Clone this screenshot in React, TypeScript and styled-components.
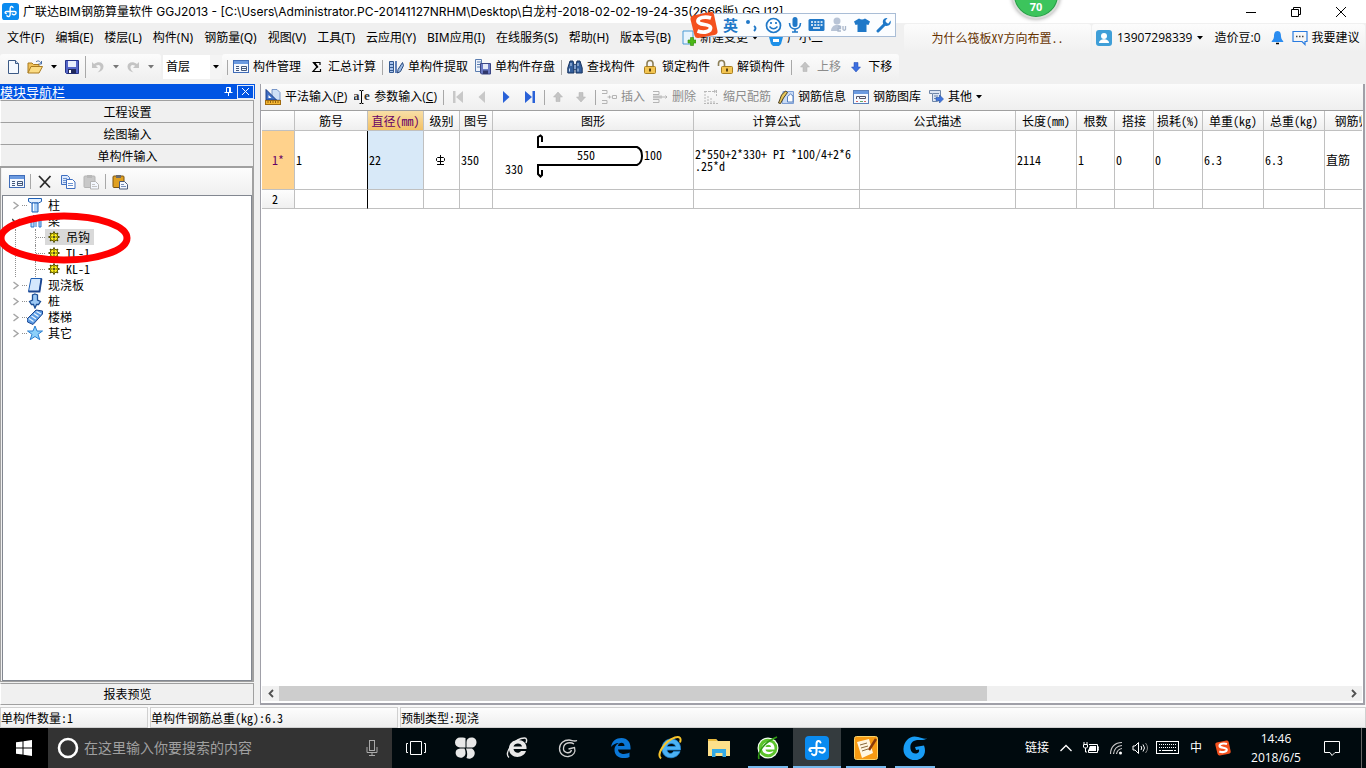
import React from "react";
import styled, { createGlobalStyle, css } from "styled-components";

const UI = `"Open Sans", "Noto Sans CJK SC", sans-serif`;
const WIDE_UI = `"Noto Sans", "Noto Sans CJK SC", sans-serif`;
const TITLE_UI = `Inter, "Noto Sans CJK SC", sans-serif`;
const SONG = `"Noto Sans Mono CJK SC", "Noto Sans CJK SC", monospace`;

const GlobalStyle = createGlobalStyle`
  * { box-sizing: border-box; }
  html, body { margin: 0; padding: 0; }
  body { background: #f0f0f0; color: #000; font: 12px/16px ${UI}; overflow: hidden; }
  button, input, select { font: inherit; color: inherit; margin: 0; }
  svg { display: block; flex: none; }
`;

const Page = styled.div`
  position: relative;
  display: flex;
  flex-direction: column;
  height: 100vh;
  background: #f0f0f0;
  overflow: hidden;
`;

const bareButton = css`
  border: 0;
  padding: 0;
  background: none;
  display: flex;
  align-items: center;
  white-space: nowrap;
  flex: none;
`;

/* ---------- title bar ---------- */

const TitleBar = styled.header`
  display: flex;
  align-items: center;
  height: 23px;
  padding-left: 2px;
  background: #fff;
  flex: none;
`;
const TitleText = styled.h1`
  flex: 1;
  margin: 0 0 0 4px;
  font-family: ${TITLE_UI};
  font-size: 12px;
  line-height: 16px;
  font-weight: 400;
  white-space: nowrap;
  overflow: hidden;
`;
const WindowButton = styled.button`
  ${bareButton}
  width: 45px;
  height: 20px;
  justify-content: center;
  &:last-child { margin-right: 3px; }
`;

/* ---------- menu bar ---------- */

const MenuBar = styled.nav`
  display: flex;
  align-items: center;
  height: 30px;
  padding-left: 2px;
  flex: none;
`;
const MenuItem = styled.button`
  ${bareButton}
  font-family: ${WIDE_UI};
  padding: 0 6px 0 5px;
  height: 24px;
  gap: 4px;
`;
const MenuSegment = styled.div<{ $width: number }>`
  display: flex;
  align-items: center;
  width: ${(p) => p.$width}px;
  height: 28px;
  margin-right: 1px;
  padding: 0 4px;
  border-radius: 3px;
  background: linear-gradient(#fcfcfc, #f0f0f0);
  flex: none;
`;
const Spacer = styled.div`
  flex: 1;
`;
const HelpLink = styled.a`
  margin: 0 auto;
  color: #663300;
  font-family: ${SONG};
  text-decoration: none;
  white-space: nowrap;
`;
const AccountItem = styled.button<{ $gap?: number; $after?: number }>`
  ${bareButton}
  gap: ${(p) => p.$gap ?? 5}px;
  margin-right: ${(p) => p.$after ?? 8}px;
`;

/* ---------- toolbars ---------- */

const ToolbarRow = styled.div`
  display: flex;
  align-items: center;
  height: 28px;
  margin-bottom: 3px;
  flex: none;
`;
const ToolGroup = styled.div`
  display: flex;
  align-items: center;
  height: 27px;
  padding: 0 3px;
  border-radius: 3px;
  background: linear-gradient(#fcfcfc, #efefef);
`;
const ToolButton = styled.button<{ $split?: boolean }>`
  ${bareButton}
  gap: ${(p) => (p.$split ? 8 : 4)}px;
  height: 24px;
  padding: 0 4px 0 3px;
  &:disabled { color: #8c8c8c; }
`;
const IconButton = styled.button<{ $width?: number }>`
  ${bareButton}
  justify-content: center;
  width: ${(p) => p.$width ?? 24}px;
  height: 24px;
`;
const Separator = styled.span<{ $height?: number }>`
  width: 1px;
  height: ${(p) => p.$height ?? 15}px;
  margin: 0 2px;
  background: #a8a8a8;
  flex: none;
`;
const FloorField = styled.label`
  position: relative;
  display: flex;
  align-items: center;
  width: 59px;
  height: 24px;
  margin: 0 0 0 2px;
  background: #fff;
`;
const FloorSelect = styled.select`
  appearance: none;
  width: 100%;
  height: 24px;
  border: 0;
  padding: 0 14px 0 3px;
  background: none;
`;
const FieldArrow = styled.span`
  position: absolute;
  right: 0;
  top: 0;
  display: flex;
  align-items: center;
  justify-content: center;
  width: 12px;
  height: 24px;
  background: #f4f4f4;
  pointer-events: none;
`;

/* ---------- work area ---------- */

const WorkArea = styled.div`
  display: flex;
  flex: 1;
  min-height: 0;
  padding-right: 1px;
`;
const Sidebar = styled.aside`
  display: flex;
  flex-direction: column;
  width: 254px;
  margin-right: 6px;
  font-family: ${SONG};
  flex: none;
`;
const SidebarHeader = styled.div`
  display: flex;
  align-items: center;
  height: 15px;
  margin: 0 -1px 1px 0;
  padding-right: 1px;
  background: #0054e3;
  color: #fff;
  line-height: 14px;
`;
const SidebarTitle = styled.span`
  flex: 1;
  font-size: 13px;
`;
const HeaderButton = styled.button<{ $boxed?: boolean }>`
  ${bareButton}
  justify-content: center;
  width: 17px;
  height: 14px;
  border: ${(p) => (p.$boxed ? "1px solid #dfe8fa" : "0")};
`;
const ModuleButton = styled.button`
  ${bareButton}
  justify-content: center;
  height: 22px;
  padding-left: 1px;
  border: 1px solid #a0a0a0;
  border-left-color: #fff;
  border-bottom: 0;
  background: #f0f0f0;
`;
const LastModuleButton = styled(ModuleButton)`
  margin-top: 1px;
  border-bottom: 1px solid #a0a0a0;
`;
const TreePanel = styled.section`
  display: flex;
  flex-direction: column;
  flex: 1;
  min-height: 0;
  border: 1px solid #a0a0a0;
  border-width: 2px 2px 1px 1px;
  padding: 0 0 0 1px;
`;
const TreeToolbar = styled.div`
  display: flex;
  align-items: center;
  height: 27px;
  padding-left: 4px;
  background: linear-gradient(#fdfdfd, #efefef);
  flex: none;
`;
const TreeBox = styled.div`
  position: relative;
  flex: 1;
  border: 1px solid #828790;
  background: #fff;
  padding-top: 1px;
`;
const TreeList = styled.ul`
  list-style: none;
  margin: 0;
  padding: 0;
`;
const Branch = styled.li`
  margin: 0;
`;
const TreeRow = styled.div`
  display: flex;
  align-items: center;
  height: 16px;
  padding-left: 7px;
`;
const Twisty = styled.button`
  ${bareButton}
  justify-content: center;
  width: 12px;
  height: 12px;
`;
const Dots = styled.span<{ $width: number }>`
  width: ${(p) => p.$width}px;
  border-top: 1px dotted #909090;
  flex: none;
`;
const NodeLabel = styled.span`
  margin-left: 5px;
`;
const ChildList = styled(TreeList)`
  margin-left: 12px;
  border-left: 1px dotted #909090;
  padding-left: 19px;
`;
const ChildRow = styled.li`
  display: flex;
  align-items: center;
  height: 16px;
  border-left: 1px dotted #909090;
`;
const ChildLabel = styled.span<{ $selected?: boolean }>`
  display: flex;
  align-items: center;
  gap: 6px;
  height: 16px;
  padding: 0 4px 0 3px;
  background: ${(p) => (p.$selected ? "#d9d9d9" : "transparent")};
`;
const HandMark = styled.svg`
  position: absolute;
  left: -5px;
  top: 15px;
  pointer-events: none;
`;

/* ---------- editor ---------- */

const Editor = styled.main`
  display: flex;
  flex-direction: column;
  flex: 1;
  min-width: 0;
  border: 1px solid #a0a0a8;
  border-width: 0 2px 2px 1px;
  background: #fff;
`;
const EditorToolbar = styled.div`
  display: flex;
  align-items: center;
  height: 27px;
  padding-left: 1px;
  border-bottom: 1px solid #a0a0a0;
  background: linear-gradient(#fcfcfc, #efefef);
  flex: none;
`;
const GridArea = styled.div`
  flex: 1;
  min-height: 0;
  margin: 0 1px;
  overflow: hidden;
  font-family: ${SONG};
`;
const Grid = styled.table`
  table-layout: fixed;
  width: 1131px;
  border-collapse: separate;
  border-spacing: 0;
`;
const HeadCell = styled.th<{ $active?: boolean }>`
  height: 20px;
  padding: 0;
  border-right: 1px solid #c0c0c0;
  border-bottom: 1px solid #c0c0c0;
  background: ${(p) => (p.$active ? "linear-gradient(#f8dfa8, #f3c165)" : "linear-gradient(#fefefe, #efefef)")};
  color: ${(p) => (p.$active ? "#660066" : "#000")};
  font-weight: 400;
  text-align: center;
  white-space: nowrap;
  overflow: hidden;
`;
const RowHead = styled.th<{ $active?: boolean }>`
  padding: 0 0 0 10px;
  border-right: 1px solid #c0c0c0;
  border-bottom: 1px solid #c0c0c0;
  background: ${(p) => (p.$active ? "#ffd28c" : "linear-gradient(#fdfdfd, #f0f0f0)")};
  color: ${(p) => (p.$active ? "#660066" : "#000")};
  font-weight: 400;
  text-align: left;
`;
const Cell = styled.td<{ $selected?: boolean; $cursor?: boolean; $height?: number }>`
  height: ${(p) => p.$height ?? 59}px;
  padding: 0 0 0 1px;
  border-right: 1px solid ${(p) => (p.$cursor ? "#000" : "#c0c0c0")};
  border-bottom: 1px solid #c0c0c0;
  background: ${(p) => (p.$selected ? "#d8e9f8" : "#fff")};
  text-align: left;
  line-height: 12px;
  white-space: pre-line;
`;
const GradeMark = styled.svg`
  margin: 0 0 0 10px;
`;
const ScrollBar = styled.div`
  display: flex;
  align-items: center;
  height: 15px;
  margin: 0 1px 2px;
  background: #f0f0f0;
  flex: none;
`;
const ScrollEnd = styled.button`
  ${bareButton}
  justify-content: center;
  width: 17px;
  height: 15px;
`;
const ScrollTrack = styled.div`
  flex: 1;
  height: 15px;
`;
const ScrollThumb = styled.div`
  width: 66.4%;
  height: 15px;
  background: #cdcdcd;
`;

/* ---------- status bar ---------- */

const StatusBar = styled.footer`
  display: flex;
  gap: 2px;
  height: 23px;
  padding-top: 2px;
  background: #f8f8f8;
  font-family: ${SONG};
  flex: none;
`;
const StatusPane = styled.div<{ $width?: number }>`
  display: flex;
  align-items: center;
  flex: ${(p) => (p.$width ? "none" : "1")};
  width: ${(p) => (p.$width ? `${p.$width}px` : "auto")};
  border: 1px solid #d0d0d0;
  background: linear-gradient(#fdfdfd, #eeeeee);
`;

/* ---------- task bar ---------- */

const TaskBar = styled.div`
  display: flex;
  height: 40px;
  background: #000a0e;
  color: #fff;
  flex: none;
`;
const TaskButton = styled.button<{ $state?: "active" | "running"; $black?: boolean }>`
  ${bareButton}
  position: relative;
  justify-content: center;
  width: 48px;
  height: 40px;
  background: ${(p) => (p.$state === "active" ? "#343b3e" : p.$black ? "#000" : "none")};
  &::after {
    content: "";
    position: absolute;
    bottom: 0;
    left: ${(p) => (p.$state === "active" ? 0 : 4)}px;
    right: ${(p) => (p.$state === "active" ? 0 : 4)}px;
    height: 2px;
    background: ${(p) => (p.$state ? "#76b9ed" : "transparent")};
  }
`;
const SearchBox = styled.label`
  display: flex;
  align-items: center;
  width: 344px;
  padding: 0 12px 0 9px;
  background: #333;
  flex: none;
`;
const SearchInput = styled.input`
  flex: 1;
  min-width: 0;
  margin-left: 5px;
  padding: 0;
  border: 0;
  outline: 0;
  background: none;
  font-size: 14px;
  line-height: 20px;
  &::placeholder { color: #a0a0a0; opacity: 1; }
`;
const TaskGroup = styled.div<{ $gap: number; $before: number }>`
  display: flex;
  gap: ${(p) => p.$gap}px;
  margin-left: ${(p) => p.$before}px;
`;
const Tray = styled.div`
  display: flex;
  align-items: center;
  gap: 10px;
`;
const TrayButton = styled.button<{ $after?: number }>`
  ${bareButton}
  margin-right: ${(p) => p.$after ?? 0}px;
`;
const Clock = styled.button`
  ${bareButton}
  flex-direction: column;
  justify-content: center;
  width: 64px;
  margin-left: 3px;
  line-height: 19px;
`;
const NotifyArea = styled.div`
  display: flex;
  width: 54px;
  margin-right: 4px;
  border-right: 1px solid #666;
`;

/* ---------- floating widgets ---------- */

const ImeBar = styled.div`
  position: absolute;
  left: 690px;
  top: 11px;
  display: flex;
  align-items: center;
`;
const ImeBadge = styled.span`
  position: relative;
  z-index: 1;
`;
const ImeStrip = styled.div`
  display: flex;
  align-items: center;
  gap: 6px;
  width: 196px;
  height: 24px;
  margin-left: -18px;
  padding: 0 3px 0 22px;
  border: 1px solid #a9bdd6;
  background: #fbfdff;
  color: #1f78c8;
`;
const ImeMode = styled.span`
  font-size: 15px;
  font-weight: 700;
  line-height: 20px;
`;
const Meter = styled.div`
  position: absolute;
  right: 306px;
  top: -29px;
  display: flex;
  align-items: flex-end;
  justify-content: center;
  width: 48px;
  height: 48px;
  padding-bottom: 2px;
  border: 2px solid #d9dcd9;
  border-radius: 50%;
  background: #3cc45c;
  box-shadow: 0 0 4px rgba(0, 0, 0, 0.4), inset 0 0 0 1px #2a9a48;
  color: #fff;
  font: 700 11px/16px "Noto Sans", sans-serif;
`;

/* ---------- drawings ---------- */

const Caret = ({ c = "#000" }: { c?: string }) => (
  <svg width="6" height="4"><path d="M0 0h6L3 3.500z" fill={c} /></svg>
);
const Ico = ({ w = 16, h = 16, children }: { w?: number; h?: number; children: React.ReactNode }) => (
  <svg width={w} height={h} viewBox={`0 0 ${w} ${h}`} fill="none">{children}</svg>
);
const GldIcon = ({ s = 17 }: { s?: number }) => (
  <svg width={s} height={s} viewBox="0 0 24 24" fill="none">
    <rect width="24" height="24" rx="4" fill="#0a8bf0" />
    <path d="M15.500 6.500C14.500 4 11.500 4.500 11.500 8v8c0 3.500-3 4-4.500 2M6 15C3.500 14.500 4 12 6.500 12H18c2.500 0 2.500 3.500 0 4.500-1.500.5-2.500 0-3.500-1" stroke="#fff" strokeWidth="2" strokeLinecap="round" strokeLinejoin="round" />
  </svg>
);
const NewIcon = () => (
  <Ico w={13} h={16}><path d="M1.500 1.500h7l3 3v10h-10z" fill="#f6faff" stroke="#3c5a86" /><path d="M8.500 1.500v3h3" fill="#c9d9ef" stroke="#3c5a86" /></Ico>
);
const OpenIcon = () => (
  <Ico><path d="M1 14V4h4l1.500 1.500H12V8" fill="#f0c25a" stroke="#a97b20" /><path d="M1 14l3-6.500h11.500L12 14z" fill="#fbdc84" stroke="#a97b20" /><path d="M9 3c2-2 4-1 5 1.500M14.500 2v3h-3" stroke="#4a6fa5" /></Ico>
);
const SaveIcon = () => (
  <Ico><path d="M1.500 1.500h13v13h-12l-1-1z" fill="#5566c8" stroke="#27358a" /><path d="M4 2h8v6H4z" fill="#e9eefb" /><path d="M4 10h8v4.500H4z" fill="#20285c" /><path d="M5 11h2v3H5z" fill="#fff" /></Ico>
);
const UndoIcon = ({ flip }: { flip?: boolean }) => (
  <Ico w={14} h={14}><path transform={flip ? "matrix(-1 0 0 1 14 0)" : undefined} d="M1 2v6h6L4.800 5.800C8 4 9.500 5.500 9.500 7.500c0 1.800-1 3.500-3 5 4-1 6-3.300 6-6C12.500 3 8 .5 3 4z" fill="#c4c4c4" /></Ico>
);
const FormIcon = () => (
  <Ico><rect x=".500" y="1.500" width="15" height="12" fill="#f4f8ff" stroke="#3f6cb8" /><path d="M1 2h14v3H1z" fill="#6b9ae0" /><path d="M3 7.500h3M3 9.500h3M3 11.500h3" stroke="#44597c" /><path d="M8.500 7.500h5v4h-5zM8.500 9.500h5" stroke="#44597c" /></Ico>
);
const SigmaIcon = () => (
  <Ico><path d="M12 6V3.500H5.500L9 8l-4 4.500h7.500V10" stroke="#000" strokeWidth="1.200" /><path d="M4.500 3h2.500l3.500 5-1 1z" fill="#000" /></Ico>
);
const ExtractIcon = () => (
  <Ico><path d="M1.500 2.500h4v11h-4z" fill="#a9c4ee" stroke="#34598f" /><path d="M2 5.500h3M2 8.500h3M2 11.500h3" stroke="#34598f" /><path d="M8 2v12" stroke="#2f5aa6" strokeWidth="1.500" /><path d="M14.500 3.500L10 10.500 9.500 14l3-1.500 3-6z" fill="#9dbbe4" stroke="#2b4a7d" /></Ico>
);
const StoreIcon = () => (
  <Ico><path d="M.500.500h6v12h-6z" fill="#eef3fb" stroke="#5a7db0" /><path d="M2 3h4M2 5.500h4M2 8h4" stroke="#5a7db0" /><path d="M5.500 4.500h10v10.500h-9l-1-1z" fill="#6a7ac4" stroke="#3b4684" /><path d="M8 5h5v5H8z" fill="#e4e9f8" /><path d="M8 11.500h5V15H8z" fill="#30386c" /></Ico>
);
const FindIcon = () => (
  <Ico><path d="M3 2h3l1 4v8H.800V9zM10 2h3l2.200 7v5H9V6z" fill="#345f9c" stroke="#17335e" /><path d="M6.500 5.500h3v5h-3z" fill="#7f9fce" stroke="#17335e" strokeWidth=".700" /><path d="M2.500 9.500v3M11 9.500v3M4 4v3M11 4v3" stroke="#c8dcf4" /></Ico>
);
const LockIcon = ({ open }: { open?: boolean }) => (
  <Ico><path d={open ? "M1.500 7V4.500a3 3 0 0 1 6 0V8" : "M5 8V4.500a3 3 0 0 1 6 0V8"} stroke="#8c7f58" strokeWidth="1.600" /><rect x={open ? 4.5 : 2.5} y="7.500" width="11" height="7" rx="1" fill="#f3c552" stroke="#a87f20" /><path d={open ? "M10 9.500v3" : "M8 9.500v3"} stroke="#5c4310" strokeWidth="2" /></Ico>
);
const ArrowIcon = ({ down, on }: { down?: boolean; on?: boolean }) => (
  <Ico><path transform={down ? "matrix(1 0 0 -1 0 16)" : undefined} d="M8 3l4.500 5H10v4.500H6V8H3.500z" fill={on ? "#3c6fe0" : "#c4c4c4"} stroke={on ? "#1c46b0" : "#b0b0b0"} strokeWidth=".500" /></Ico>
);
const NavIcon = ({ kind }: { kind: "first" | "prev" | "next" | "last" }) => {
  const on = kind === "next" || kind === "last";
  const f = on ? "#2a62d8" : "#c8c8c8";
  return (
    <Ico>
      <path transform={on ? undefined : "matrix(-1 0 0 1 16 0)"} d={kind === "first" || kind === "last" ? "M3 2l7 6-7 6zM10.500 2h2.500v12h-2.500z" : "M5 2l6.500 6L5 14z"} fill={f} />
    </Ico>
  );
};
const RulerIcon = () => (
  <Ico><path d="M7 .500h5l3 3v7.500H7z" fill="#cfe0f6" stroke="#5d82bc" strokeWidth=".800" /><path d="M1 .500V11h10.500z" fill="#3f6fc4" stroke="#1c3f86" /><path d="M3.500 6v3h3z" fill="#fff" /><rect x=".500" y="11.500" width="15" height="4" fill="#f5b733" stroke="#a06b10" /><path d="M3 12v2M5.500 12v2M8 12v2M10.500 12v2M13 12v2" stroke="#7a4e08" strokeWidth=".800" /></Ico>
);
const AeIcon = () => (
  <Ico>
    <text x="-1" y="11" fontFamily="Liberation Serif" fontWeight="700" fontSize="13" fill="#333">a</text>
    <text x="10" y="11" fontFamily="Liberation Serif" fontWeight="700" fontSize="13" fill="#333">e</text>
    <path d="M5.500 1.500h1.500l.500.500.500-.500h1.500M7.500 2v12M5.500 14.500h1.500l.500-.500.500.500h1.500" stroke="#000" />
  </Ico>
);
const InsertIcon = () => (
  <Ico><path d="M1 1.500h5v3H1M1 11.500h5v3H1M11.500 6.500h4v3h-4zM6.500 8h4M8.500 6.500v3" stroke="#b4b4b4" /></Ico>
);
const DeleteIcon = () => (
  <Ico><path d="M1 2.500h6v3H1M1 13.500h6v-3H1M10 8h5M13.500 6.500L15 8l-1.500 1.500" stroke="#b4b4b4" /><path d="M1 6.500h9v3H1z" fill="#c4c4c4" /></Ico>
);
const ScaleIcon = () => (
  <Ico><path d="M2 2v12M5 7v7M8 9v5M11 12v2M1 14.500h14" stroke="#b8b8b8" strokeDasharray="2 1" /><path d="M1 2.500h12M11 1l2 1.500L11 4M13.500 1v6" stroke="#b8b8b8" strokeDasharray="3 1" /></Ico>
);
const InfoIcon = () => (
  <Ico><path d="M5 2.500h10.500v12H4z" fill="#c9dbf5" stroke="#7d9fd4" /><path d="M9.500 7.500l3-2.500 2.500 2v6H9.500z" fill="#fff" stroke="#5780bf" /><path d="M.500 14l3-8 4-4 2 1.500-4 5.500-3 5.500z" fill="#e6c65a" stroke="#3a3014" strokeWidth=".900" /></Ico>
);
const LibraryIcon = () => (
  <Ico><rect x=".500" y="1.500" width="15" height="13" fill="#f6faff" stroke="#5a7fb8" /><path d="M1 2h14v3H1z" fill="#6b9be0" /><path d="M3.500 10V7.500h3M6.500 9.500v-2h6v2z" stroke="#556" /><path d="M3 12.500h2M11 12.500h2" stroke="#d66" /><path d="M7 12.500h3" stroke="#6a6" /></Ico>
);
const OtherIcon = () => (
  <Ico><path d="M1.500 1.500h11v9l-3 2h-5v-8h-3z" fill="#dce6f4" stroke="#6f86a8" /><path d="M5 4.500h6M6 7h4M6 9.500h3" stroke="#6f86a8" /><path d="M8 8.500h3.500V6l4 4-4 4v-2.500H8z" fill="#3f74dc" stroke="#2450a8" strokeWidth=".600" /></Ico>
);
const XIcon = () => (
  <Ico><path d="M2 2l11 11.500M13.500 2L3 13.500" stroke="#2b2b2b" strokeWidth="1.800" /></Ico>
);
const CopyIcon = () => (
  <Ico><path d="M1.500 1.500h6l2 2v7h-8z" fill="#dce9fd" stroke="#3f6fc0" /><path d="M6.500 5.500h6l2.500 2.500v6.500H6.500z" fill="#fff" stroke="#3f6fc0" /><path d="M3 4.500h4M3 6.500h3M3 8.500h3M8 9.500h5M8 11.500h5" stroke="#6d93d0" /></Ico>
);
const PasteIcon = ({ on }: { on?: boolean }) => (
  <Ico><rect x="1" y="2" width="11" height="11.500" rx="1" fill={on ? "#e0a020" : "#c8c8c8"} stroke={on ? "#7a5310" : "#b4b4b4"} /><path d="M4 1h5v3H4z" fill={on ? "#6a6a6a" : "#b8b8b8"} /><path d="M7.500 7.500h5l3 3v4.500h-8z" fill="#f4f8ff" stroke={on ? "#4a5a78" : "#b4b4b4"} /><path d="M9 10.500h3M9 12.500h5" stroke={on ? "#7a90b8" : "#c4c4c4"} /></Ico>
);
const GearIcon = () => (
  <Ico w={12} h={12}><path d="M6 .500v11M.500 6h11M2.100 2.100l7.800 7.800M9.900 2.100L2.100 9.900" stroke="#4a4600" strokeWidth="1.800" /><circle cx="6" cy="6" r="4" fill="#fff01a" stroke="#6a6400" /><path d="M6 3v1.500M6 7.500V9M3 6h1.500M7.500 6H9" stroke="#4a4600" /><circle cx="6" cy="6" r="1" fill="#222" /></Ico>
);
const treeArt: Record<string, React.ReactNode> = {
  column: <><path d="M1.500 1.500h13v3l-3 1.500h-7L1.500 4.500z" fill="#e4f1ff" stroke="#1f5fb4" /><path d="M5 6h6v9H5z" fill="#a9d0f8" stroke="#1f5fb4" /><path d="M6.500 6.500V14" stroke="#fff" /></>,
  beam: <path d="M4 5l3-3v12H4zM9 4h5v10h-2V7H9v7" fill="#b8dafc" stroke="#2f74c8" />,
  slab: <><path d="M4 1.500h10.500L12.500 14.500H1.500z" fill="#d4e8fd" stroke="#1f5fb4" /><path d="M14.500 1.500L12.500 14.500H1.500" stroke="#1c4690" strokeWidth="1.800" /></>,
  pile: <path d="M8 1l2.500 1v5l3 1.500-2 3H9.500L8 15l-1.500-3.500h-2l-2-3 3-1.500V2z" fill="#9cc8f4" stroke="#1c4f96" strokeWidth="1.300" />,
  stair: <><path d="M0 10l9-9 6.500 1v3L6 15.500.500 13z" fill="#5c9ce4" stroke="#1c4690" /><path d="M2 9.500l4.500 3M4.500 7l4.500 3M7 4.500l4.500 3M9.500 2.500L14 5" stroke="#eaf4ff" strokeWidth="1.300" /></>,
  star: <path d="M8 1l2 5h5.500l-4.500 3.300 1.800 5.400L8 11.500l-4.800 3.200L5 9.300.500 6H6z" fill="#8cd0fa" stroke="#2b7fd0" />,
};
const SogouLogo = ({ s }: { s: number }) => (
  <svg width={s} height={s} viewBox="0 0 28 28" fill="none">
    <path d="M3 4.500Q0 5.500.500 8.500l4 16q1 3 4 2.500l16-3q3.500-1 3-4L24 3.500q-1-3.500-4-2.500z" fill="#f4511e" />
    <path d="M21 7C15 5 7.500 6.500 8 10.500s12 2 12.500 6-6 6-13 3.500" stroke="#fff" strokeWidth="3.800" />
  </svg>
);

/* ---------- content ---------- */

const menus = ["文件(F)", "编辑(E)", "楼层(L)", "构件(N)", "钢筋量(Q)", "视图(V)", "工具(T)", "云应用(Y)", "BIM应用(I)", "在线服务(S)", "帮助(H)", "版本号(B)"];
const modules = ["工程设置", "绘图输入", "单构件输入"];
const columns: [string, number][] = [
  ["", 33], ["筋号", 73], ["直径(mm)", 56], ["级别", 36], ["图号", 33], ["图形", 201], ["计算公式", 166], ["公式描述", 156],
  ["长度(mm)", 61], ["根数", 38], ["搭接", 39], ["损耗(%)", 49], ["单重(kg)", 61], ["总重(kg)", 61], ["钢筋归类", 68],
];
const tree: { name: string; art: string; children?: string[] }[] = [
  { name: "柱", art: "column" },
  { name: "梁", art: "beam", children: ["吊钩", "TL-1", "KL-1"] },
  { name: "现浇板", art: "slab" },
  { name: "桩", art: "pile" },
  { name: "楼梯", art: "stair" },
  { name: "其它", art: "star" },
];

const RebarShape = () => (
  <svg width="198" height="57" viewBox="0 0 198 57" fill="none">
    <path d="M48 10V5l-1.500-1.500L44 5v10h99q5 2 5 9t-5 9H44v9l2.500 2.500L48 43v-5" stroke="#000" strokeWidth="2" />
    <text x="83" y="28" fontFamily={SONG} fontSize="12" fill="#000">550</text>
    <text x="150" y="28" fontFamily={SONG} fontSize="12" fill="#000">100</text>
    <text x="11" y="42" fontFamily={SONG} fontSize="12" fill="#000">330</text>
  </svg>
);

const taskApps: { name: string; state?: "active" | "running"; art: React.ReactNode }[] = [
  { name: "Edge", art: <Ico w={20} h={20}><path d="M0 9C1 3 5 0 10.500 0 17 0 20 5 19.500 11.500H7c.5 5 7 5.500 11.500 3V19c-6 2.500-15 1-15-7C3.500 8 6 6 8 5 4.500 5 1.500 7 0 9zm7-1h6.500c0-4.500-6-4-6.500 0z" fill="#0b78d8" /></Ico> },
  { name: "Internet Explorer", art: <Ico w={24} h={24}><path d="M13 3c6.500 0 10 4.500 9.500 11H9c.5 4 5 4.500 6.500 1.500h6.500c-3 9-18 8.500-18-3C4 7 8 3 13 3zM9 10.500h8.500c-.5-4-7.500-4-8.500 0z" fill="#4cb2f4" stroke="#1f86d8" strokeWidth=".800" /><path d="M3 22.500C-2 18 7 5 17 1.500c5-1.500 6.500 1 5 5" stroke="#f6c42c" strokeWidth="2" /></Ico> },
  { name: "文件资源管理器", art: <Ico w={22} h={20}><path d="M0 1h8l2 2h12v15H0z" fill="#fde08a" /><path d="M0 1h8l1 2H0z" fill="#e8b93c" /><path d="M4 19v-8h14v8h-3.500v-4h-7v4z" fill="#34aae6" /></Ico> },
  { name: "360浏览器", state: "running", art: <Ico w={24} h={24}><circle cx="12" cy="12" r="10.500" fill="#f4fff0" /><circle cx="12" cy="12" r="9.300" fill="#5cc42c" /><path d="M12.500 6c4 0 6.500 3 6 7.500h-9c.5 3 4.500 3 8 1.500C15.500 20 6 19 6 12.500 6 8.500 9 6 12.500 6zm-3 5h5.500c0-3-5-3-5.500 0z" fill="#fff" /><path d="M3 23C1 17 8 6 21 1" stroke="#2e9a12" strokeWidth="1.600" /></Ico> },
  { name: "广联达BIM钢筋算量软件", state: "active", art: <GldIcon s={24} /> },
  { name: "图文编辑", state: "running", art: <Ico w={24} h={24}><rect x=".500" y=".500" width="23" height="23" rx="2" fill="#f79a12" stroke="#f9d26a" /><path d="M3 6l12-3 4 14-11 5z" fill="#fff6e0" /><path d="M6 9l7-2M7 12l7-2M8 15l6-2" stroke="#8a6a3c" /><path d="M22 3l-7 11" stroke="#8a3a08" strokeWidth="2.500" /></Ico> },
  { name: "广联达G+", state: "running", art: <Ico w={24} h={24}><path d="M24 2.500C20 5 17 3.500 14 4 8 5 7 9 7.500 13c.5 3.500 3.500 5 6 4.500 2-.5 3-2 2.500-4l-3 .5-1-3 9-1.500C24 17 20 24 12 24 5 24 0 19 .500 12.500 1 4 8-1.500 15 1c3 1 6 2 9 1.500z" fill="#189cf4" /></Ico> },
];

export default function App() {
  return (
    <Page>
      <GlobalStyle />
      <TitleBar>
        <GldIcon />
        <TitleText>广联达BIM钢筋算量软件 GGJ2013 - [C:\Users\Administrator.PC-20141127NRHM\Desktop\白龙村-2018-02-02-19-24-35(2666版).GGJ12]</TitleText>
        <WindowButton aria-label="最小化"><Ico w={12} h={12}><path d="M1 6.500h10" stroke="#000" /></Ico></WindowButton>
        <WindowButton aria-label="还原"><Ico w={12} h={12}><path d="M1.500 3.500h7v7h-7zM3.500 3V1.500h7v7H9" stroke="#000" /></Ico></WindowButton>
        <WindowButton aria-label="关闭"><Ico w={12} h={12}><path d="M1 1l10 10M11 1L1 11" stroke="#000" /></Ico></WindowButton>
      </TitleBar>

      <MenuBar>
        {menus.map((m) => <MenuItem key={m}>{m}</MenuItem>)}
        <MenuItem>
          <Ico w={14} h={16}><path d="M1 1h10v13H1z" fill="#e8f4fd" stroke="#4a9ad4" /><path d="M8.500 7.500h3v2.500H14v3h-2.500v2.500h-3V13H6v-3h2.500z" fill="#4cb818" stroke="#2f8a08" strokeWidth=".600" /></Ico>
          新建变更
          <Caret />
        </MenuItem>
        <MenuItem>
          <Ico w={14} h={16}><path d="M0 7l3-4h8l3 4-2 7-2 2H4l-2-2z" fill="#1e90e8" /><path d="M4 9h6v3H4z" fill="#fff" /></Ico>
          广小二
        </MenuItem>
        <Spacer />
        <MenuSegment $width={187}><HelpLink href="#faq">为什么筏板XY方向布置..</HelpLink></MenuSegment>
        <MenuSegment $width={273}>
          <AccountItem $after={11}>
            <Ico><rect width="16" height="16" rx="3" fill="#3f9fd8" /><circle cx="8" cy="6" r="3" fill="#fff" /><path d="M3 13c0-5 10-5 10 0z" fill="#fff" /></Ico>
            13907298339
            <Caret />
          </AccountItem>
          <AccountItem $after={10}>造价豆:0</AccountItem>
          <AccountItem $after={8} aria-label="通知"><Ico w={13}><path d="M6.500 1C3.500 1 3 4 3 6.500 3 9 1 10.500.500 12h12C12 10.500 10 9 10 6.500 10 4 9.500 1 6.500 1z" fill="#2a8cf0" /><path d="M5 13.500h3" stroke="#000" strokeWidth="1.500" /></Ico></AccountItem>
          <AccountItem $gap={4} $after={0}>
            <Ico><path d="M1 1.500h14v10h-2v3l-3-3H1z" stroke="#2a7ce0" strokeWidth="1.200" /><path d="M4 6.500h8" stroke="#444" strokeWidth="1.500" strokeDasharray="1.500 1.500" /></Ico>
            我要建议
          </AccountItem>
        </MenuSegment>
      </MenuBar>

      <ToolbarRow>
        <ToolGroup>
          <IconButton $width={21} aria-label="新建"><NewIcon /></IconButton>
          <ToolButton $split aria-label="打开"><OpenIcon /><Caret /></ToolButton>
          <IconButton $width={22} aria-label="保存"><SaveIcon /></IconButton>
          <Separator $height={22} />
          <ToolButton $split disabled aria-label="撤销"><UndoIcon /><Caret c="#777" /></ToolButton>
          <ToolButton $split disabled aria-label="恢复"><UndoIcon flip /><Caret c="#777" /></ToolButton>
        </ToolGroup>
        <FloorField>
          <FloorSelect aria-label="楼层" defaultValue="首层"><option>首层</option></FloorSelect>
          <FieldArrow><Caret /></FieldArrow>
        </FloorField>
        <ToolGroup>
          <Separator />
          <ToolButton><FormIcon />构件管理</ToolButton>
          <ToolButton><SigmaIcon />汇总计算</ToolButton>
          <Separator />
          <ToolButton><ExtractIcon />单构件提取</ToolButton>
          <ToolButton><StoreIcon />单构件存盘</ToolButton>
          <Separator />
          <ToolButton><FindIcon />查找构件</ToolButton>
          <ToolButton><LockIcon />锁定构件</ToolButton>
          <ToolButton><LockIcon open />解锁构件</ToolButton>
          <Separator />
          <ToolButton disabled><ArrowIcon />上移</ToolButton>
          <ToolButton><ArrowIcon down on />下移</ToolButton>
        </ToolGroup>
      </ToolbarRow>

      <WorkArea>
        <Sidebar>
          <SidebarHeader>
            <SidebarTitle>模块导航栏</SidebarTitle>
            <HeaderButton aria-label="固定"><Ico w={9} h={9}><path d="M2.500 5.500v-5h4v5M5.500.500v5M.500 5.500h8M4.500 6v3" stroke="#fff" /></Ico></HeaderButton>
            <HeaderButton $boxed aria-label="关闭"><Ico w={9} h={9}><path d="M1 1l7 7M8 1L1 8" stroke="#fff" /></Ico></HeaderButton>
          </SidebarHeader>
          {modules.map((m) => <ModuleButton key={m}>{m}</ModuleButton>)}
          <TreePanel>
            <TreeToolbar>
              <IconButton $width={22} aria-label="构件管理"><FormIcon /></IconButton>
              <Separator />
              <IconButton $width={23} aria-label="删除"><XIcon /></IconButton>
              <IconButton $width={23} aria-label="复制"><CopyIcon /></IconButton>
              <IconButton $width={24} disabled aria-label="粘贴"><PasteIcon /></IconButton>
              <Separator />
              <IconButton $width={24} aria-label="粘贴构件"><PasteIcon on /></IconButton>
            </TreeToolbar>
            <TreeBox>
              <TreeList>
                {tree.map((n) => (
                  <Branch key={n.name}>
                    <TreeRow>
                      <Twisty aria-label={n.name}>
                        <Ico w={8} h={9}>{n.children ? <path d="M0 2l4 4 4-4" stroke="#404040" strokeWidth="1.500" /> : <path d="M1.500 1L6 4.500 1.500 8" stroke="#a6a6a6" strokeWidth="1.500" />}</Ico>
                      </Twisty>
                      <Dots $width={5} />
                      <Ico>{treeArt[n.art]}</Ico>
                      <NodeLabel>{n.name}</NodeLabel>
                    </TreeRow>
                    {n.children && (
                      <ChildList>
                        {n.children.map((c, i) => (
                          <ChildRow key={c}>
                            <Dots $width={9} />
                            <ChildLabel $selected={i === 0}><GearIcon />{c}</ChildLabel>
                          </ChildRow>
                        ))}
                      </ChildList>
                    )}
                  </Branch>
                ))}
              </TreeList>
              <HandMark width="134" height="54" viewBox="0 0 134 54" fill="none">
                <ellipse cx="66" cy="27" rx="63" ry="22" stroke="#f00" strokeWidth="7" />
              </HandMark>
            </TreeBox>
          </TreePanel>
          <LastModuleButton>报表预览</LastModuleButton>
        </Sidebar>

        <Editor>
          <EditorToolbar>
            <ToolButton><RulerIcon /><span>平法输入(<u>P</u>)</span></ToolButton>
            <ToolButton><AeIcon /><span>参数输入(<u>C</u>)</span></ToolButton>
            <Separator />
            <IconButton disabled aria-label="首条"><NavIcon kind="first" /></IconButton>
            <IconButton disabled aria-label="上一条"><NavIcon kind="prev" /></IconButton>
            <IconButton aria-label="下一条"><NavIcon kind="next" /></IconButton>
            <IconButton aria-label="末条"><NavIcon kind="last" /></IconButton>
            <Separator />
            <IconButton $width={23} disabled aria-label="上移行"><ArrowIcon /></IconButton>
            <IconButton $width={23} disabled aria-label="下移行"><ArrowIcon down /></IconButton>
            <Separator />
            <ToolButton disabled><InsertIcon />插入</ToolButton>
            <ToolButton disabled><DeleteIcon />删除</ToolButton>
            <ToolButton disabled><ScaleIcon />缩尺配筋</ToolButton>
            <ToolButton><InfoIcon />钢筋信息</ToolButton>
            <ToolButton><LibraryIcon />钢筋图库</ToolButton>
            <ToolButton><OtherIcon />其他<Caret /></ToolButton>
          </EditorToolbar>
          <GridArea>
            <Grid>
              <colgroup>{columns.map(([n, w], i) => <col key={n + i} style={{ width: w }} />)}</colgroup>
              <thead>
                <tr>{columns.map(([n], i) => <HeadCell key={n + i} $active={i === 2}>{n}</HeadCell>)}</tr>
              </thead>
              <tbody>
                <tr>
                  <RowHead $active>1*</RowHead>
                  <Cell $cursor>1</Cell>
                  <Cell $selected>22</Cell>
                  <Cell>
                    <GradeMark width="11" height="11" viewBox="0 0 11 11" fill="none" role="img" aria-label="三级钢"><path d="M5.500 0v10M2.500 2.500h6l1 1v2l-1 1h-6l-1-1v-2zM2 9.500h7" stroke="#000" /></GradeMark>
                  </Cell>
                  <Cell>350</Cell>
                  <Cell><RebarShape /></Cell>
                  <Cell>{"2*550+2*330+ PI *100/4+2*6\n.25*d"}</Cell>
                  <Cell />
                  <Cell>2114</Cell>
                  <Cell>1</Cell>
                  <Cell>0</Cell>
                  <Cell>0</Cell>
                  <Cell>6.3</Cell>
                  <Cell>6.3</Cell>
                  <Cell>直筋</Cell>
                </tr>
                <tr>
                  <RowHead>2</RowHead>
                  {columns.slice(1).map(([n], i) => <Cell key={n} $height={19} $cursor={i === 0} />)}
                </tr>
              </tbody>
            </Grid>
          </GridArea>
          <ScrollBar>
            <ScrollEnd aria-label="向左滚动"><Ico w={8} h={9}><path d="M6 1L2.500 4.500 6 8" stroke="#505050" strokeWidth="1.800" /></Ico></ScrollEnd>
            <ScrollTrack><ScrollThumb /></ScrollTrack>
            <ScrollEnd aria-label="向右滚动"><Ico w={8} h={9}><path d="M2 1l3.500 3.500L2 8" stroke="#505050" strokeWidth="1.800" /></Ico></ScrollEnd>
          </ScrollBar>
        </Editor>
      </WorkArea>

      <StatusBar>
        <StatusPane $width={148}>单构件数量:1</StatusPane>
        <StatusPane $width={248}>单构件钢筋总重(kg):6.3</StatusPane>
        <StatusPane>预制类型:现浇</StatusPane>
      </StatusBar>

      <TaskBar>
        <TaskButton $black aria-label="开始"><Ico><path d="M0 2.300l6.500-.9v6.100H0zM7.500 1.200L16 0v7.500H7.500zM0 8.500h6.500v6.100L0 13.700zM7.500 8.500H16V16l-8.500-1.200z" fill="#fff" /></Ico></TaskButton>
        <SearchBox>
          <Ico w={22} h={22}><circle cx="11" cy="11" r="9" stroke="#fff" strokeWidth="2.600" /></Ico>
          <SearchInput placeholder="在这里输入你要搜索的内容" aria-label="搜索" />
          <Ico w={16} h={18}><rect x="5.500" y="1.500" width="5" height="10" stroke="#aaa" /><path d="M3 8v5.500h10V8M8 13.500V17M5 16.500h6" stroke="#aaa" /></Ico>
        </SearchBox>
        <TaskButton aria-label="任务视图"><Ico w={22} h={16}><path d="M5.500 1.500h11v13h-11zM3 3.500H1.500v9H3M19 3.500h1.500v9H19" stroke="#fff" /></Ico></TaskButton>
        <TaskGroup $gap={3} $before={2}>
          <TaskButton aria-label="旋风"><Ico w={22} h={22}><path d="M10.500 1v9.500H5a5 5 0 0 1 0-10c2 0 4 0 5.500.5zM11.500 5c0-3 2-4.500 5-4.500 3 0 5 2 5 4.700 0 3-2 5.300-5 5.300h-5zM11 11.500h6a5 5 0 1 1-5.500 9.500c1-3 1-6-.5-9.500zM10.500 17a5 5 0 1 1-9-4c2-2 6-1.500 8-1.500 1 2 1 3.500 1 5.500z" fill="#e8e8e8" /></Ico></TaskButton>
          <TaskButton aria-label="浏览器"><Ico w={22} h={22}><path d="M12 3c5.500 0 9 3.500 8.500 9H7.500c.5 4 5.500 5 7.500 2h5c-2 8-17 8.500-17-2.500C3 6.500 7 3 12 3zM7.500 9.500h8.500c-.5-4-7.500-4-8.500 0z" fill="#e8e8e8" /><path d="M3 20.500C-3 16 9 1 18.500 1c2.500 0 2.500 2.500 1.500 5" stroke="#e8e8e8" strokeWidth="1.400" /></Ico></TaskButton>
          <TaskButton aria-label="G+"><Ico w={20} h={20}><path d="M19 2.500c-3 1.500-5-.5-8-.5C6 2 1.500 5 1.500 10.500S6 19 10.500 18.500c5-.5 7.500-4.500 6-9l-6 1.500M16 6c-3-2-10-2-10.500 4-.5 5 6.500 6.500 8 2" stroke="#d0d0d0" strokeWidth="1.300" /></Ico></TaskButton>
        </TaskGroup>
        <TaskGroup $gap={1} $before={5}>
          {taskApps.map((a) => <TaskButton key={a.name} $state={a.state} aria-label={a.name}>{a.art}</TaskButton>)}
        </TaskGroup>
        <Spacer />
        <Tray>
          <TrayButton>链接</TrayButton>
          <TrayButton aria-label="显示隐藏的图标"><Ico w={14} h={10}><path d="M1.500 8L7 2.500 12.500 8" stroke="#fff" strokeWidth="1.300" /></Ico></TrayButton>
          <TrayButton aria-label="电源"><Ico w={16} h={14}><path d="M6 3.500h8.500v8h-9v-3" stroke="#fff" /><path d="M7 5h6v5H6V7z" fill="#fff" /><path d="M15 6h1v3h-1zM1 1v2M4 1v2M.500 3.500h4V6l-1 1h-2l-1-1zM2.500 7v4H4" stroke="#fff" /></Ico></TrayButton>
          <TrayButton aria-label="网络"><Ico w={13} h={14}><path d="M1.500 13C1.500 6 6 1.500 13 1.500M4.500 13C5 8 8 5 13 4.500M7.500 13C8 10 10 8 13 7.500" stroke="#ccc" strokeWidth="1.200" /><circle cx="11.500" cy="12" r="1.500" fill="#fff" /></Ico></TrayButton>
          <TrayButton $after={-2} aria-label="音量"><Ico w={16} h={14}><path d="M1 5h2l3.500-3.500v11L3 9H1zM9 5q1.500 2 0 4M11 3.500q3 3.500 0 7" stroke="#fff" /><path d="M13.500 2q4 5 0 10" stroke="#888" /></Ico></TrayButton>
          <TrayButton aria-label="触摸键盘"><Ico w={24} h={14}><rect x=".500" y=".500" width="22" height="12" stroke="#fff" /><path d="M3 3.500h17M3 6.500h17" stroke="#fff" strokeDasharray="1 1" /><path d="M3 9.500h2M6 9.500h11M18 9.500h2" stroke="#fff" /></Ico></TrayButton>
          <TrayButton $after={3}>中</TrayButton>
          <TrayButton aria-label="搜狗输入法"><SogouLogo s={16} /></TrayButton>
          <Clock><time>14:46</time><time>2018/6/5</time></Clock>
        </Tray>
        <NotifyArea>
          <TaskButton aria-label="操作中心"><Ico w={17} h={17}><path d="M.500 1.500h15v11H11L8 15.500 6 12.500H.500z" stroke="#fff" /></Ico></TaskButton>
        </NotifyArea>
      </TaskBar>

      <ImeBar>
        <ImeBadge><SogouLogo s={28} /></ImeBadge>
        <ImeStrip>
          <ImeMode>英</ImeMode>
          <Ico w={15}><circle cx="4" cy="5" r="2" fill="#1f78c8" /><path d="M10 9q3 2 0 5" stroke="#1f78c8" strokeWidth="2" /></Ico>
          <Ico w={17} h={17}><circle cx="8.500" cy="8.500" r="7" stroke="#1f78c8" strokeWidth="1.700" /><path d="M4.500 9.500q4 4.500 8 0" stroke="#1f78c8" strokeWidth="1.500" /><path d="M6 5v2M11 5v2" stroke="#1f78c8" strokeWidth="1.700" /></Ico>
          <Ico w={14}><rect x="4.500" y="0" width="5" height="10" rx="2.500" fill="#1f78c8" /><path d="M1.500 6c0 8 11 8 11 0M7 12v3M4 15h6" stroke="#1f78c8" strokeWidth="1.600" /></Ico>
          <Ico w={17}><rect x=".500" y="2" width="16" height="12" rx="1.500" fill="#1f78c8" /><path d="M3 5h11.500M3 8h11.500" stroke="#fff" strokeWidth="1.500" strokeDasharray="2 1.200" /><path d="M5 11h7" stroke="#fff" strokeWidth="1.500" /></Ico>
          <Ico w={17}><circle cx="6" cy="4" r="3.500" fill="#b8c4d6" /><path d="M0 14c0-7 9-8 10-4l-3 4z" fill="#b8c4d6" /><path d="M7 9.500h2.500v2H7V14h3M12 9v3.500q1 1.500 2.500 0V9" stroke="#a9b7cb" strokeWidth="1.300" /></Ico>
          <Ico><path d="M5 1.500q3 2 6 0L16 4.500l-1.500 3.500-2-.5V15h-9V7.500L1.500 8 0 4.500z" fill="#1f78c8" /></Ico>
          <Ico><path d="M2 14L9.500 6.500" stroke="#1f78c8" strokeWidth="3" strokeLinecap="round" /><path d="M14.500 3.500a4 4 0 1 1-3-2.500L9.500 3.500l.5 2.500 2.500.5z" fill="#1f78c8" /></Ico>
        </ImeStrip>
      </ImeBar>
      <Meter>70</Meter>
    </Page>
  );
}
